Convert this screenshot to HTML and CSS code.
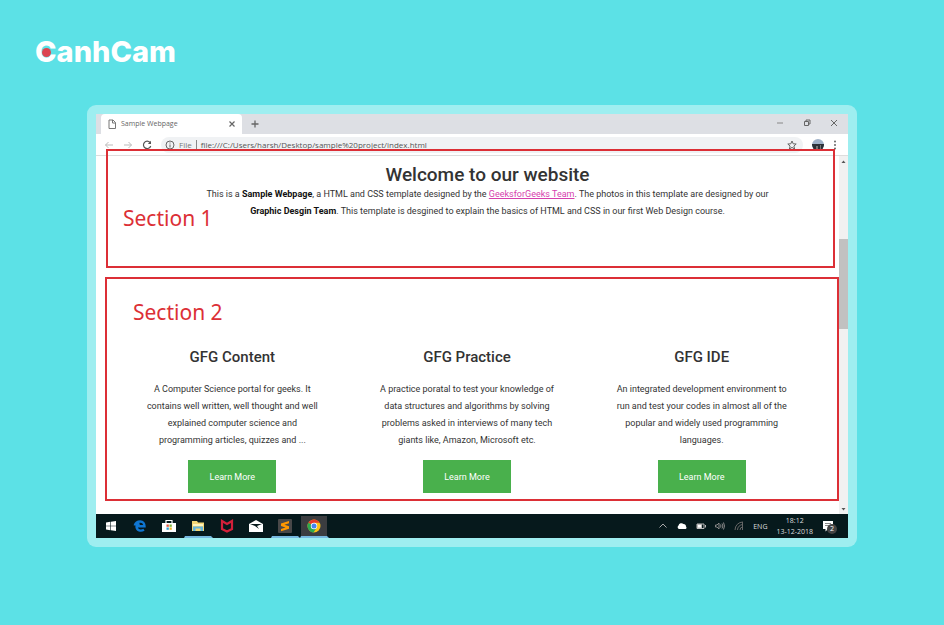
FILE: index.html
```html
<!DOCTYPE html>
<html lang="en">

<head>
	<meta charset="UTF-8">
	<meta name="viewport" content="width=device-width, initial-scale=1.0">
	<title>Sample Webpage</title>
	<link rel="stylesheet" href="styles.css">
</head>

<body>
	<div class="logo">CanhCam<span class="logo-dot"></span></div>

	<div class="frame">
		<div class="tabs">
			<div class="tab">
				<svg width="10" height="10" viewBox="0 0 10 10" fill="none" stroke="#777">
					<path d="M2 1h4l2.500 2.500v6H2zM5.500 1v3h3" />
				</svg>
				<span class="tab-title">Sample Webpage</span>
				<button class="icon-btn" aria-label="Close tab">
					<svg width="8" height="8" viewBox="0 0 8 8" stroke="#666" stroke-width="1.200"><path d="M1.500 1.500l5 5M6.500 1.500l-5 5" /></svg>
				</button>
			</div>
			<button class="icon-btn new-tab" aria-label="New tab">
				<svg width="10" height="10" viewBox="0 0 10 10" stroke="#666" stroke-width="1.300"><path d="M1.500 5h7M5 1.500v7" /></svg>
			</button>
			<div class="window-btns">
				<button class="icon-btn" aria-label="Minimize">
					<svg width="8" height="8" viewBox="0 0 8 8" stroke="#888"><path d="M1 4h6" /></svg>
				</button>
				<button class="icon-btn" aria-label="Restore">
					<svg width="8" height="8" viewBox="0 0 8 8" fill="none" stroke="#666"><path d="M1.500 2.500h4v4h-4zM3 2.500V1h4v4H5.500" /></svg>
				</button>
				<button class="icon-btn" aria-label="Close">
					<svg width="8" height="8" viewBox="0 0 8 8" stroke="#666"><path d="M1 1l6 6M7 1L1 7" /></svg>
				</button>
			</div>
		</div>

		<div class="toolbar">
			<button class="icon-btn" aria-label="Back">
				<svg width="10" height="10" viewBox="0 0 10 10" fill="none" stroke="#bbb"><path d="M9 5H1.500M4.500 2l-3 3 3 3" /></svg>
			</button>
			<button class="icon-btn" aria-label="Forward">
				<svg width="10" height="10" viewBox="0 0 10 10" fill="none" stroke="#bbb"><path d="M1 5h7.500M5.500 2l3 3-3 3" /></svg>
			</button>
			<button class="icon-btn" aria-label="Reload">
				<svg width="10" height="10" viewBox="0 0 10 10" fill="none" stroke="#555" stroke-width="1.200"><path d="M8 2.500A3.700 3.700 0 1 0 8.700 6" /><path d="M9 .800v3.200H5.800z" fill="#555" stroke="none" /></svg>
			</button>
			<div class="address">
				<svg width="10" height="10" viewBox="0 0 10 10" fill="none" stroke="#666"><circle cx="5" cy="5" r="4" /><path d="M5 4.500v3M5 2.500v1" /></svg>
				<span class="scheme">File</span>
				<span class="url">file:///C:/Users/harsh/Desktop/sample%20project/index.html</span>
				<svg width="10" height="10" viewBox="0 0 10 10" fill="none" stroke="#666"><path d="M5 1l1.200 2.800 3 .200-2.300 2 .700 3L5 7.400 2.400 9l.700-3L.800 4l3-.200z" /></svg>
			</div>
			<svg width="12" height="12" viewBox="0 0 12 12"><circle cx="6" cy="6" r="6" fill="#9fb1c8" /><path d="M0 5h12a6 6 0 0 1-12 1z" fill="#2c3138" /><path d="M1 6h10v3a6 6 0 0 1-10 0z" fill="#2c3138" /><path d="M4 7h2v3H4zM8 6h1v4H8z" fill="#777" /></svg>
			<svg width="4" height="10" viewBox="0 0 4 10" fill="#666"><circle cx="2" cy="1.500" r="1" /><circle cx="2" cy="5" r="1" /><circle cx="2" cy="8.500" r="1" /></svg>
		</div>

		<div class="viewport">
			<main class="page">
				<section class="section intro">
					<span class="label">Section 1</span>
					<h1>Welcome to our website</h1>
					<p>This is a <b>Sample Webpage</b>, a HTML and CSS template designed by the <a href="#">GeeksforGeeks Team</a>. The photos in this template are designed by our <b>Graphic Desgin Team</b>. This template is desgined to explain the basics of HTML and CSS in our first Web Design course.</p>
				</section>

				<section class="section features">
					<span class="label">Section 2</span>
					<div class="column">
						<h2>GFG Content</h2>
						<p>A Computer Science portal for geeks. It contains well written, well thought and well explained computer science and programming articles, quizzes and ...</p>
						<button class="more">Learn More</button>
					</div>
					<div class="column">
						<h2>GFG Practice</h2>
						<p>A practice poratal to test your knowledge of data structures and algorithms by solving problems asked in interviews of many tech giants like, Amazon, Microsoft etc.</p>
						<button class="more">Learn More</button>
					</div>
					<div class="column">
						<h2>GFG IDE</h2>
						<p>An integrated development environment to run and test your codes in almost all of the popular and widely used programming languages.</p>
						<button class="more">Learn More</button>
					</div>
				</section>
			</main>
			<div class="scrollbar">
				<svg width="9" height="10" viewBox="0 0 9 10" fill="#555"><path d="M2.500 7l2-2.500 2 2.500z" /></svg>
				<div class="thumb"></div>
				<svg width="9" height="10" viewBox="0 0 9 10" fill="#555"><path d="M2.500 4l2 2.500 2-2.500z" /></svg>
			</div>
		</div>

		<div class="taskbar">
			<button class="task" aria-label="Start">
				<svg width="14" height="14" viewBox="0 0 14 14" fill="#fff"><path d="M2 3.400l4.300-.600v3.900H2zM6.900 2.700L12 2v4.700H6.900zM2 7.300h4.300v3.900L2 10.600zM6.900 7.300H12V12l-5.100-.700z" /></svg>
			</button>
			<button class="task" aria-label="Edge">
				<svg width="14" height="14" viewBox="0 0 14 14" fill="none" stroke="#0f76d2" stroke-width="2.400"><path d="M3.500 7.200h8c0-3-1.700-4.700-4.200-4.700S2.500 4 1.700 6.500M3.500 7.200c0 4.500 4.500 5.300 7.500 3.600M3.700 7.500c.300-1.500 1.300-2.500 2.800-3" /></svg>
			</button>
			<button class="task" aria-label="Store">
				<svg width="16" height="14" viewBox="0 0 16 14"><path d="M1 4h14v9H1z" fill="#fff" /><path d="M5 4V1.500h6V4" fill="none" stroke="#fff" stroke-width="1.200" /><path d="M5.500 5.500h2.300v2.300H5.500z" fill="#e5533c" /><path d="M8.500 5.500h2.300v2.300H8.500z" fill="#7bb53a" /><path d="M5.500 8.500h2.300v2.300H5.500z" fill="#2a9fd8" /><path d="M8.500 8.500h2.300v2.300H8.500z" fill="#f0b429" /></svg>
			</button>
			<button class="task open" aria-label="File Explorer">
				<svg width="14" height="14" viewBox="0 0 14 14"><path d="M1 2h5l1 1.500h6V12H1z" fill="#f3d675" /><path d="M2 5h10v2H2z" fill="#fff3bd" /><path d="M2 7.500h10V12H9.500V9.500h-5V12H2z" fill="#65b5dc" /></svg>
			</button>
			<button class="task" aria-label="McAfee">
				<svg width="14" height="14" viewBox="0 0 14 14" fill="none" stroke="#d3203a" stroke-width="2.200"><path d="M2 2v8l5 2.500 5-2.500V2L7 5z" /></svg>
			</button>
			<button class="task" aria-label="Mail">
				<svg width="16" height="14" viewBox="0 0 16 14"><path d="M1 5l7-4 7 4v8H1z" fill="#fff" /><path d="M2 5h12L9 7l2 3-4-3z" fill="#06191c" /></svg>
			</button>
			<button class="task open" aria-label="Sublime Text">
				<svg width="14" height="14" viewBox="0 0 14 14"><rect width="14" height="14" rx="1" fill="#484848" /><path d="M11 2v2.300L6.500 5.700 11 7.200v2.600L3 12.300V10l4.500-1.500L3 7V4.500z" fill="#ff9800" /></svg>
			</button>
			<button class="task open current" aria-label="Chrome">
				<svg width="14" height="14" viewBox="0 0 14 14"><circle cx="7" cy="7" r="6.500" fill="#fbc116" /><path d="M7 7L1.400 3.700A6.500 6.500 0 0 1 12.600 3.800H7z" fill="#e33b2e" /><path d="M7 7L1.400 3.700A6.500 6.500 0 0 0 6.500 13.500L9.800 8.600z" fill="#2da94f" /><circle cx="7" cy="7" r="3.200" fill="#fff" /><circle cx="7" cy="7" r="2.500" fill="#4285f4" /></svg>
			</button>

			<div class="tray">
				<svg width="10" height="10" viewBox="0 0 10 10" fill="none" stroke="#aaa"><path d="M1.500 6.500L5 3l3.500 3.500" /></svg>
				<svg width="10" height="10" viewBox="0 0 10 10" fill="#fff"><path d="M2 8a2 2 0 0 1-.500-3.500A3 3 0 0 1 6.500 3 2.500 2.500 0 0 1 9 5.500 1.500 1.500 0 0 1 8.500 8z" /></svg>
				<svg width="10" height="10" viewBox="0 0 10 10" fill="none" stroke="#bbb"><path d="M1 3h7v4.500H1zM9.500 4v2.500" /><path d="M1.500 3.500h4v3.500h-4z" fill="#fff" /></svg>
				<svg width="10" height="10" viewBox="0 0 10 10" fill="none" stroke="#888"><path d="M.500 4h1.500l2-2v6L2 6H.500zM5.500 3.500q1 1.500 0 3M7 2.500q1.800 2.500 0 5M8.500 1.500q2 3.500 0 7" /></svg>
				<svg width="10" height="10" viewBox="0 0 10 10" fill="none" stroke="#666"><path d="M1 9a8 8 0 0 1 8-8M3.500 9A5.500 5.500 0 0 1 9 3.500M6 9a3 3 0 0 1 3-3M8.500 9V1" /></svg>
				<span>ENG</span>
				<div class="clock">
					<span>18:12</span>
					<span>13-12-2018</span>
				</div>
				<div class="notes">
					<svg width="12" height="12" viewBox="0 0 12 12"><path d="M1 1h10v8H6l-2.500 2.500V9H1z" fill="#fff" /><path d="M3 3.500h6M3 5.500h6" stroke="#888" /></svg>
					<span class="badge">2</span>
				</div>
			</div>
		</div>
	</div>
</body>

</html>
```
FILE: styles.css
```css
* {
	margin: 0;
	padding: 0;
	box-sizing: border-box;
}

body {
	padding: 32px 87px 64px;
	background: #5ce1e6;
	font-family: Roboto, sans-serif;
	font-size: 9px;
	color: #333;
}

svg {
	display: block;
	flex: none;
}

button {
	border: 0;
	background: none;
	font: inherit;
}

.logo {
	position: relative;
	width: 144px;
	margin: 0 0 33px -52px;
	font: 800 29px/40px Inter, sans-serif;
	color: #fff;
}

.logo-dot {
	position: absolute;
	left: 7px;
	top: 16px;
	width: 9px;
	height: 9px;
	border-radius: 50%;
	background: #dc4550;
}

.frame {
	padding: 9px;
	border-radius: 9px;
	background: #9eeef0;
}

/* browser window */
.tabs {
	display: flex;
	align-items: center;
	height: 20px;
	padding-left: 5px;
	background: #dddfe4;
}

.tab {
	display: flex;
	align-items: center;
	gap: 4px;
	width: 141px;
	height: 20px;
	padding: 0 6px;
	border-radius: 4px 4px 0 0;
	background: #fff;
}

.tab-title {
	flex: 1;
	font: 7px/10px "Open Sans", sans-serif;
	color: #666;
}

.icon-btn {
	display: flex;
}

.new-tab {
	margin-left: 8px;
}

.window-btns {
	display: flex;
	gap: 19px;
	margin-left: auto;
	padding: 0 10px 3px 0;
}

.toolbar {
	display: flex;
	align-items: center;
	gap: 9px;
	height: 22px;
	padding: 0 11px 0 8px;
	border-bottom: 1px solid #ddd;
	background: #fff;
}

.address {
	display: flex;
	flex: 1;
	align-items: center;
	gap: 4px;
	height: 16px;
	padding: 0 6px 0 4px;
	border-radius: 8px;
	background: #f0f2f4;
	font: 8px/10px "Open Sans", sans-serif;
	color: #555;
}

.scheme {
	padding-right: 4px;
	border-right: 1px solid #888;
	color: #777;
}

.url {
	flex: 1;
}

.viewport {
	display: flex;
	background: #fff;
}

.page {
	flex: 1;
	margin-top: -7px;
	padding: 0 0 13px 9px;
}

.section {
	position: relative;
	border: 2px solid #dc2f36;
	text-align: center;
}

.section p {
	line-height: 17px;
}

.label {
	position: absolute;
	font: 21px/28px "Noto Sans", sans-serif;
	color: #dc2f36;
}

.intro {
	min-height: 119px;
	margin: 0 4px 9px 1px;
	padding: 12px 52px 0 86px;
}

.intro .label {
	left: 15px;
	top: 53px;
}

.intro h1 {
	font-size: 19px;
	font-weight: 500;
	line-height: 23px;
}

.intro a {
	color: #d63fae;
}

b {
	color: #111;
}

.features {
	display: grid;
	grid-template-columns: repeat(3, 1fr);
	padding: 66px 18px 6px 8px;
}

.features .label {
	left: 26px;
	top: 19px;
}

.column {
	padding: 0 26px;
}

.column h2 {
	margin-bottom: 12px;
	font-size: 15px;
	font-weight: 500;
	line-height: 24px;
}

.more {
	width: 88px;
	height: 33px;
	margin-top: 11px;
	background: #49b04c;
	color: #fff;
}

.scrollbar {
	display: flex;
	flex-direction: column;
	width: 9px;
	background: #f1f1f1;
}

.thumb {
	height: 90px;
	margin: 73px 0 auto;
	background: #c1c1c1;
}

.taskbar {
	display: flex;
	height: 24px;
	padding: 0 14px 0 1px;
	background: #06191c;
}

.task {
	display: flex;
	align-items: center;
	justify-content: center;
	width: 29px;
	border: solid transparent;
	border-width: 2px 2px 2px 1px;
	background-clip: padding-box;
}

.open {
	border-bottom-color: #76b9e0;
}

.current {
	background-color: #3b3d40;
}

.tray {
	display: flex;
	align-items: center;
	gap: 9px;
	margin-left: auto;
	font: 7px/11px "Open Sans", sans-serif;
	color: #ddd;
}

.clock {
	display: flex;
	flex-direction: column;
	align-items: center;
}

.notes {
	position: relative;
}

.badge {
	position: absolute;
	left: 5px;
	top: 4px;
	width: 10px;
	height: 10px;
	border-radius: 50%;
	background: #444;
	line-height: 10px;
	text-align: center;
	color: #fff;
}
```
